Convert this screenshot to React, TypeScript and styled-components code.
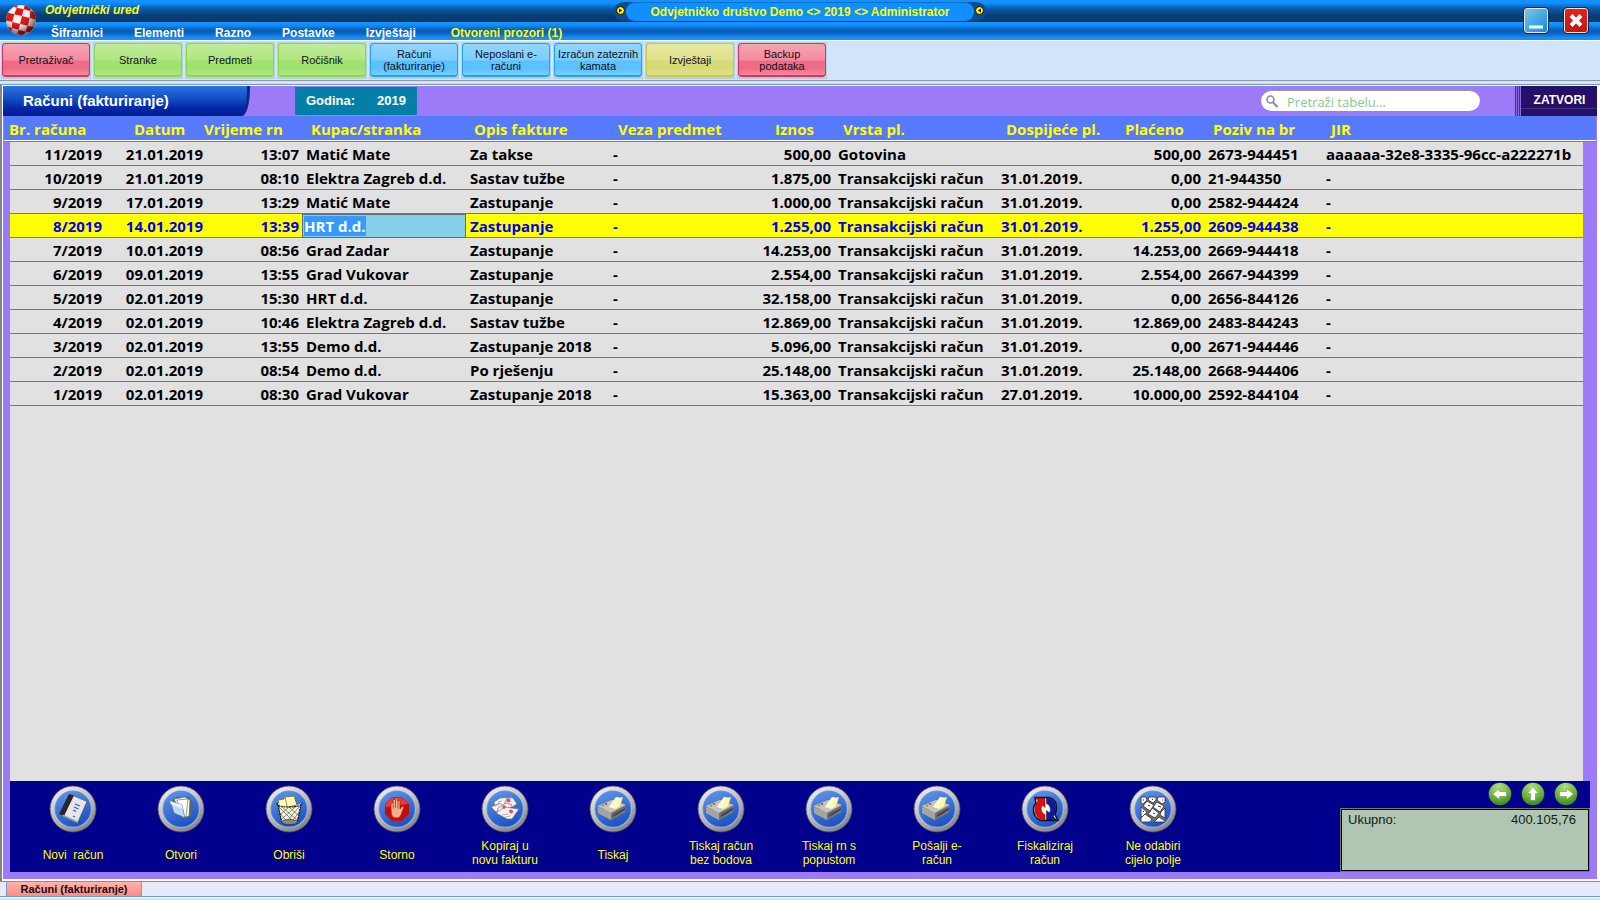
import React, { useEffect, useRef } from "react";
import styled, { createGlobalStyle } from "styled-components";

const sans = `"Liberation Sans", Arial, sans-serif`;
const grid = `"Open Sans", "Noto Sans", sans-serif`;

const GlobalStyle = createGlobalStyle`
  * { box-sizing: border-box; }
  body { margin: 0; background: #d0e5fa; font-family: ${sans}; }
  button, input { font: inherit; }
  button { border: 0; padding: 0; background: none; cursor: pointer; }
`;

const Shell = styled.div`
  display: flex;
  flex-direction: column;
  height: 100vh;
  min-height: 520px;
`;

/* Title bar */

const TitleBar = styled.header`
  display: grid;
  grid-template-columns: 1fr auto 1fr;
  align-items: start;
  height: 41px;
  flex: none;
  border-bottom: 1px solid #fff;
  background:
    linear-gradient(#1492ff 0, #1090ff 3px, #0b5fb4 8px, #083f78 15px, #083a6a 21px, #062c50 22px,
      #1492ff 22px, #1090ff 25px, #0a5cb4 30px, #0c62c0 33px, #1490ff 38px, #1492ff 40px);
`;

const Brand = styled.div`
  display: flex;
  gap: 8px;
  padding: 0 0 0 5px;
  white-space: nowrap;
`;

const Logo = styled.svg`
  width: 32px;
  height: 32px;
  margin-top: 4px;
`;

const AppName = styled.div`
  height: 22px;
  font: italic bold 12px/20px ${sans};
  color: #ffff00;
`;

const Menu = styled.nav`
  display: flex;
  gap: 31px;
  padding: 1px 0 0 6px;
`;

const MenuLink = styled.a<{ $hot?: boolean }>`
  margin-left: ${(p) => (p.$hot ? "4px" : "0")};
  font: bold 12px/20px ${sans};
  color: ${(p) => (p.$hot ? "#ffff00" : "#ffffff")};
  text-decoration: none;
`;

const Plaque = styled.div`
  display: flex;
  align-items: center;
  justify-content: space-between;
  width: 372px;
  height: 19px;
  margin-top: 2px;
  padding: 0 2px;
  border-radius: 10px;
  background: #0a4c8c;
`;

const PlaqueText = styled.div`
  flex: 1;
  height: 19px;
  margin: 0 1px;
  border-top: 1px solid #0d6fd0;
  border-radius: 9px;
  background: #1090ff;
  font: bold 12px/18px ${sans};
  color: #ffff00;
  text-align: center;
  white-space: nowrap;
`;

const Rivet = styled.svg`
  width: 9px;
  height: 9px;
  margin-bottom: 2px;
`;

const WindowButtons = styled.div`
  display: flex;
  justify-content: flex-end;
  gap: 14px;
  padding: 7px 11px 0 0;
`;

const WindowButton = styled.button<{ $close?: boolean }>`
  width: 26px;
  height: 27px;
  border: 1px solid #0a2a5c;
  border-radius: 4px;
  box-shadow: inset 0 0 0 1px #f0e4cc;
  background: ${(p) =>
    p.$close ? "linear-gradient(#e6231c, #c01812)" : "linear-gradient(135deg, #7cc8f0, #0c8cd8)"};

  svg { display: block; }
`;

/* Toolbar */

const Toolbar = styled.div`
  display: flex;
  flex: none;
  gap: 2px;
  height: 40px;
  padding: 1px 0 0 1px;
  border-bottom: 1px solid #9a93a8;
  background: #d0e5fa;
`;

const tones = {
  red: { edge: "#e0305c", top: "#f6a4b4", mid: "#f58ca0", low: "#ee6c88" },
  green: { edge: "#8cd84c", top: "#c0ec98", mid: "#b0e682", low: "#a0e270" },
  blue: { edge: "#1ca4f4", top: "#92d6fe", mid: "#7ccefe", low: "#5cc2fe" },
  olive: { edge: "#ccc84c", top: "#e6e8a0", mid: "#e0e28c", low: "#d8da78" },
};
type Tone = keyof typeof tones;

const ToolSlot = styled.div`
  width: 90px;
  height: 37px;
  padding: 1px;
  background: #b2d4e2;
`;

const ToolButton = styled.button<{ $tone: Tone }>`
  display: block;
  width: 88px;
  height: 34px;
  border: 1px solid ${(p) => tones[p.$tone].edge};
  border-bottom-width: 2px;
  border-radius: 4px;
  background: linear-gradient(
    ${(p) => tones[p.$tone].top} 0,
    ${(p) => tones[p.$tone].mid} 50%,
    ${(p) => tones[p.$tone].low} 56%,
    ${(p) => tones[p.$tone].low} 80%,
    ${(p) => tones[p.$tone].mid} 100%
  );
  font: 11px/12px ${sans};
  color: #101018;
  white-space: pre;
`;

/* Work area */

const Workspace = styled.main`
  display: flex;
  flex: 1;
  flex-direction: column;
  min-height: 0;
  margin-top: 3px;
  padding: 0 3px 2px 1px;
  border-top: 1px solid #6a9cc4;
  border-left: 2px solid #85838f;
  background: #fff;
`;

const Panel = styled.section`
  display: flex;
  flex: 1;
  flex-direction: column;
  min-height: 0;
  margin-top: 1px;
  padding-bottom: 7px;
  background: #9b7bf7;
`;

const PanelHead = styled.div`
  display: flex;
  flex: none;
  height: 30px;
`;

const PanelTitle = styled.h1`
  width: 247px;
  margin: 0 45px 0 0;
  padding-left: 20px;
  border-radius: 0 0 8px 0 / 0 0 28px 0;
  border-right: 3px solid #0a2880;
  background: linear-gradient(#2c72e4 0, #1450c4 12px, #0428a8 22px, #021c8c 30px);
  font: bold 15px/30px ${sans};
  color: #fff;
`;

const YearBox = styled.div`
  display: flex;
  justify-content: space-between;
  width: 122px;
  height: 28px;
  margin-top: 1px;
  padding: 0 11px;
  background: #0480a8;
  font: bold 13px/27px ${sans};
  color: #fff;
`;

const SearchBox = styled.label`
  display: flex;
  align-items: center;
  width: 219px;
  height: 21px;
  margin: 4px 35px 0 auto;
  padding: 0 10px 0 5px;
  border-radius: 11px;
  border-top: 1px solid #9c94b4;
  background: #fff;
`;

const SearchInput = styled.input`
  flex: 1;
  min-width: 0;
  height: 20px;
  margin-left: 9px;
  padding: 2px 0 0;
  border: 0;
  outline: 0;
  background: transparent;
  font: 13px/18px ${grid};
  &::placeholder { color: #8cc88c; opacity: 1; }
`;

const CloseButton = styled.button`
  width: 82px;
  height: 30px;
  padding: 0 0 3px 7px;
  background:
    linear-gradient(#463080, #463080) 6px 22px / 76px 1px no-repeat,
    repeating-linear-gradient(90deg, #4a2c90 0, #4a2c90 1px, #8a6ae0 1px, #8a6ae0 2px) 0 0 / 6px 30px no-repeat,
    #250f68;
  font: bold 12px/24px ${sans};
  color: #fff;
`;

/* Invoice grid */

const TableArea = styled.div`
  display: flex;
  flex: 1;
  flex-direction: column;
  min-height: 0;
  margin: 0 1px;
  overflow: hidden;
`;

const Table = styled.table`
  width: 100%;
  table-layout: fixed;
  border-spacing: 0;
  font: bold 15px/22px ${grid};
`;

const HeadCell = styled.th<{ $indent: number }>`
  height: 26px;
  padding: 2px 0 2px ${(p) => p.$indent}px;
  background: #567afb;
  box-shadow: inset 0 -1px 0 #567af0, inset 0 -2px 0 #fff;
  color: #ffff00;
  text-align: left;
  white-space: nowrap;
`;

const Row = styled.tr<{ $active: boolean }>`
  background: ${(p) => (p.$active ? "#ffff00" : "#e1e1e1")};
  color: ${(p) => (p.$active ? "#0000f4" : "#000")};
`;

const Cell = styled.td<{ $right?: boolean; $flush?: boolean; $editing?: boolean }>`
  height: 24px;
  padding: ${(p) => (p.$editing ? "0" : `1px ${p.$flush ? 1 : 3}px 1px 4px`)};
  box-shadow: inset 0 -1px 0 #5278e4;
  overflow: hidden;
  text-align: ${(p) => (p.$right ? "right" : "left")};
  white-space: nowrap;

  &:first-child { border-left: 6px solid #9b7bf7; }
  &:last-child { border-right: 13px solid #9b7bf7; }
`;

const EditInput = styled.input`
  display: block;
  width: 100%;
  height: 24px;
  padding: 0 1px;
  border: 1px solid #5c6c74;
  border-radius: 0;
  outline: 0;
  background: #87ceeb;
  font: bold 15px/22px ${grid};
  color: #0000f4;
  &::selection { background: rgba(51, 153, 255, 0.99); color: #fff; }
`;

const EmptyGrid = styled.div`
  flex: 1;
  border: solid #9b7bf7;
  border-width: 0 13px 0 6px;
  background: #e1e1e1;
`;

/* Action bar */

const ActionBar = styled.footer`
  display: flex;
  flex: none;
  height: 91px;
  margin: 0 7px;
  padding-left: 9px;
  background: #00008c;
`;

const ActionButton = styled.button`
  display: flex;
  flex-direction: column;
  align-items: center;
  width: 108px;
  padding-top: 4px;
  font: 12px/14px ${sans};
  color: #ffff00;
`;

const ActionLabel = styled.span<{ $single: boolean }>`
  display: flex;
  align-items: center;
  height: 30px;
  margin-top: 5px;
  padding-top: ${(p) => (p.$single ? "4px" : "0")};
  text-align: center;
  white-space: pre;
`;

const Totals = styled.div`
  display: flex;
  flex-direction: column;
  width: 250px;
  margin-left: auto;
`;

const Pager = styled.div`
  display: flex;
  justify-content: flex-end;
  gap: 9px;
  height: 27px;
  padding: 1px 12px 0 0;
`;

const PagerButton = styled.button`
  width: 24px;
  height: 24px;
  svg { display: block; }
`;

const TotalBox = styled.dl`
  display: flex;
  justify-content: space-between;
  height: 64px;
  margin: 0;
  padding: 2px 13px 0 7px;
  border: 1px solid #6c7c70;
  box-shadow: inset 0 0 0 1px #000;
  background: #b0c6b2;
  font: 13px/18px ${sans};
  color: #181818;
  dt, dd { margin: 0; }
`;

/* Window tabs */

const TabStrip = styled.div`
  display: flex;
  flex: none;
  height: 16px;
  padding-left: 6px;
  border-top: 1px solid #8f8f9b;
  border-bottom: 1px solid #6a9cc4;
  background: #e8eafa;
`;

const Tab = styled.button`
  width: 136px;
  border: solid #7c9cc0;
  border-width: 0 1px;
  background: linear-gradient(#ffb4ac, #fc8c84);
  font: bold 11px/14px ${sans};
  color: #1c0c10;
`;

const BottomEdge = styled.div`
  flex: none;
  height: 3px;
  border-top: 1px solid #fff;
  background: #d0e5fa;
`;

/* Drawings */

function BallLogo() {
  return (
    <Logo viewBox="0 0 32 32" aria-hidden="true">
      <defs>
        <radialGradient id="ballShade" cx="0.4" cy="0.35" r="0.65">
          <stop offset="0.5" stopColor="#000" stopOpacity="0" />
          <stop offset="1" stopColor="#200" stopOpacity="0.65" />
        </radialGradient>
        <clipPath id="ballClip"><circle cx="16" cy="16" r="15" /></clipPath>
      </defs>
      <g clipPath="url(#ballClip)">
        <rect width="32" height="32" fill="#f8f0ee" />
        <g fill="#e01818" transform="rotate(14 16 16)">
          <path d="M5-1h5l-1 6H3zM16-1h6l1 6h-7zM9 5h7v7H8zM23 5h6l2 7h-7zM1 12h7v8H1zM16 12h8v8h-8zM8 20h8v6H9zM24 20h8l-3 6h-6zM3 26h6l1 6H5zM16 26h7l-1 7h-6z" />
        </g>
        <circle cx="16" cy="16" r="15" fill="url(#ballShade)" />
      </g>
    </Logo>
  );
}

function PlaqueRivet({ flip }: { flip?: boolean }) {
  return (
    <Rivet viewBox="0 0 9 9" aria-hidden="true">
      <circle cx="4.5" cy="4.5" r="4" fill="#ffee10" stroke="#101008" />
      <path d={flip ? "M6 2.5v4l-3-2z" : "M3 2.5v4l3-2z"} fill="#101008" />
    </Rivet>
  );
}

const glyphs: Record<string, React.ReactNode> = {
  notebook: (
    <g>
      <path d="M23 10l15 6.500-9.500 21.500L12 30z" fill="#e4e6ea" stroke="#555a66" strokeWidth=".8" />
      <path d="M20 9l5 1.500L15 31l-5-2z" fill="#26262c" />
      <path d="M13 31l15 7 1-1.500-15-7z" fill="#9a9ca4" />
      <path d="M26 19l5 2M25 22l4.500 2M24 25l3 1.400M24 31l2 1" stroke="#3868a0" strokeWidth="1.300" />
    </g>
  ),
  folder: (
    <g stroke="#555c68" strokeWidth=".6">
      <path d="M16 15l4-3 5 1 7-1 2 4 2 5-2 4 1 5-5 3-12-9z" fill="#5c6878" />
      <path d="M17 14l11-2 5 3-1 16-6 2z" fill="#fffbe0" />
      <path d="M20 15l11-1-2 18-5-2z" fill="#fff" />
      <path d="M13 16l12 4 3 13-11-5z" fill="#bcd8f8" />
      <path d="M13 16l12 4 .8 4-12-5z" fill="#e6f2ff" stroke="none" />
    </g>
  ),
  bin: (
    <g>
      <path d="M13 15l6-1 1-2 9-1 3 9-17 4z" fill="#fffcc0" stroke="#7c7418" strokeWidth=".9" />
      <path d="M20 12l2 9" stroke="#a8a020" />
      <path d="M13 18l4 20q7 3 15 0l4-20q-12 8-23 0z" fill="#f6f4d8" />
      <path d="M13 21l17 17M17 22l15 13M24 22l10 9M14 27l10 12M36 20L20 38M30 22L17 34M24 22l-9 8M35 26L25 39" stroke="#5c5c50" strokeWidth=".7" />
      <path d="M12 18q0 4 12 4t13-4M13 20l4 18q7 3 15 0l4-18" fill="none" stroke="#16161c" strokeWidth="1.200" strokeDasharray="2 .7" />
      <ellipse cx="24.500" cy="37" rx="8" ry="2.500" fill="#88888c" stroke="#333" strokeWidth=".7" />
    </g>
  ),
  stop: (
    <g>
      <path d="M19 12h10l7 7v10l-7 7H19l-7-7V19z" fill="#c80c0c" />
      <path d="M19 12.500h10l6.500 6.500-23 3V19z" fill="#e83c34" />
      <path d="M18 24v-6q1.200-1.500 2 0v-3q1.200-1.500 2.200 0v-1q1.400-1.500 2.400 0v2q1.400-1.500 2.400 0v8l2-2.500q2-1 1.800.8L28 30q-1 3-4.500 3-4 0-5-3.500z" fill="#f2b08c" stroke="#8c2c18" strokeWidth=".7" />
      <path d="M20.200 17v6.500M22.500 15v8M25 16v7.500" stroke="#8c2c18" strokeWidth=".7" />
    </g>
  ),
  copy: (
    <g fill="#f2f2f4" stroke="#62626e" strokeWidth=".6">
      <path d="M13 17l6-4 13-1-5 8-13 4z" />
      <path d="M26 13l6 0 4 6-8 5-6-2z" />
      <path d="M10 22l9-4 5 5-9 4z" />
      <path d="M17 23l8-5 6 2-4 7-11 1z" />
      <path d="M15 28l9-6 14 2-7 10-5 0z" />
      <g fill="#f0485c" stroke="none">
        <circle cx="27.500" cy="15.500" r="2" /><circle cx="23" cy="22" r="1.800" /><circle cx="30" cy="26.500" r="2" />
      </g>
      <path d="M14 21l5-2M21 30l6-1M24 32l5-1M17 17l4-1" stroke="#8c8c98" />
    </g>
  ),
  printer: (
    <g>
      <path d="M9 21l13-6 15 6-1 6-14 8-13-7z" fill="#8c8c8c" />
      <path d="M9 21l14-6 14 5-15 8z" fill="#c4c4c2" />
      <path d="M22 28l15-8v5l-15 10z" fill="#6e6e70" />
      <path d="M9 22l13 6v7L9 28z" fill="#a4a4a4" />
      <path d="M24 29.500l12-6.500v2L24 32z" fill="#48484a" />
      <path d="M20 22l7-10q4 1 7 0l-3 9q-3 3-5 3z" fill="#fff8a4" />
      <path d="M27 12l3 .4-5 10.600-5-1z" fill="#fffcd4" />
      <path d="M13 20l2 1" stroke="#30c830" strokeWidth="1.400" />
      <path d="M16 18.500l2 1" stroke="#e03028" strokeWidth="1.400" />
    </g>
  ),
  cycle: (
    <g>
      <path d="M14 12.500h14q8 2 7.500 11-.5 4-1.500 6l3 6H20q-8-3-7.500-12 .5-4 2.500-5z" fill="#fff8dc" stroke="#18141c" strokeWidth="1.600" />
      <path d="M15 13h9v9.500l-2.500-2.500q-2.500 3.500-.5 7 1 2 3 2.500V35q-6 0-9-5.500-3-7.500 2-13.500z" fill="#d81014" stroke="#58080c" strokeWidth=".5" />
      <path d="M35.500 35H25.500v-9.500l3 2.500q2-3.500 0-7-1-2-3-2.500V13q6 0 8.500 5.500 2.500 7-1.500 13z" fill="#1018a4" stroke="#080828" strokeWidth=".5" />
    </g>
  ),
  keys: (
    <g>
      <rect x="12" y="12" width="24" height="25" fill="#707074" />
      <g fill="#fbfbfb" stroke="#303034" strokeWidth=".8">
        <path d="M12 12h5l1 3-4 4-2-1zM20 12h7l0 3-3 3-5-3zM29 12h7v5l-3 2-5-4z" />
        <path d="M18 16l7 4-4 6-7-5zM28 17l7 4-4 6-7-5z" />
        <path d="M12 22l6 5-4 5-2-1zM21 27l2-4 7 5-4 5-7-4zM32 27l4-4v10l-5-3z" />
        <path d="M12 33l4-4 7 5-2 3h-9zM30 32l6 4v1H25z" />
      </g>
      <path d="M19 20l2 1M29 21l3 1M14 26l1 1M24 28l2 1M14 15l1 0M23 14l1 1M33 15l1 0" stroke="#303034" />
    </g>
  ),
};

function RoundIcon({ name }: { name: string }) {
  return (
    <svg width="48" height="48" viewBox="0 0 48 48" aria-hidden="true">
      <defs>
        <linearGradient id={`rim-${name}`} x1="0.2" y1="0" x2="0.75" y2="1">
          <stop offset="0" stopColor="#f0f0f0" />
          <stop offset="0.5" stopColor="#bcbcc0" />
          <stop offset="1" stopColor="#808084" />
        </linearGradient>
        <linearGradient id={`disc-${name}`} x1="0.2" y1="0" x2="0.6" y2="1">
          <stop offset="0" stopColor="#5c94ea" />
          <stop offset="1" stopColor="#1c50c0" />
        </linearGradient>
      </defs>
      <circle cx="24" cy="24" r="23" fill={`url(#rim-${name})`} stroke="#50545c" strokeWidth=".8" />
      <circle cx="24" cy="24" r="19" fill="#dcdce2" opacity=".6" />
      <circle cx="24" cy="24" r="18" fill={`url(#disc-${name})`} stroke="#5c8cdc" strokeWidth=".8" />
      {glyphs[name]}
    </svg>
  );
}

function ArrowIcon({ turn }: { turn: number }) {
  return (
    <svg width="24" height="24" viewBox="0 0 24 24" aria-hidden="true">
      <defs>
        <radialGradient id={`leaf${turn}`} cx="0.45" cy="0.2" r="0.8">
          <stop offset="0" stopColor="#b4e478" />
          <stop offset="0.6" stopColor="#6cb43c" />
          <stop offset="1" stopColor="#3c8420" />
        </radialGradient>
      </defs>
      <circle cx="12" cy="12" r="11.300" fill={`url(#leaf${turn})`} />
      <path
        transform={`rotate(${turn} 12 12)`}
        d="M4.500 12l7-5.500v3H18.500v5h-7v3z"
        fill="#fff"
        stroke="#4a8c28"
        strokeWidth=".5"
      />
    </svg>
  );
}

/* Data */

const menu = ["Šifrarnici", "Elementi", "Razno", "Postavke", "Izvještaji"];

const tools: { label: string; tone: Tone }[] = [
  { label: "Pretraživač", tone: "red" },
  { label: "Stranke", tone: "green" },
  { label: "Predmeti", tone: "green" },
  { label: "Ročišnik", tone: "green" },
  { label: "Računi\n(fakturiranje)", tone: "blue" },
  { label: "Neposlani e-\nračuni", tone: "blue" },
  { label: "Izračun zateznih\nkamata", tone: "blue" },
  { label: "Izvještaji", tone: "olive" },
  { label: "Backup\npodataka", tone: "red" },
];

const columns: { title: string; width?: number; indent: number; right?: boolean; flush?: boolean }[] = [
  { title: "Br. računa", width: 101, indent: 5, right: true },
  { title: "Datum", width: 99, indent: 29, right: true, flush: true },
  { title: "Vrijeme rn", width: 98, indent: 0, right: true },
  { title: "Kupac/stranka", width: 164, indent: 9 },
  { title: "Opis fakture", width: 143, indent: 8 },
  { title: "Veza predmet", width: 144, indent: 9 },
  { title: "Iznos", width: 81, indent: 22, right: true },
  { title: "Vrsta pl.", width: 163, indent: 9 },
  { title: "Dospijeće pl.", width: 120, indent: 9 },
  { title: "Plaćeno", width: 87, indent: 8, right: true },
  { title: "Poziv na br", width: 118, indent: 9 },
  { title: "JIR", indent: 9 },
];

const TR = "Transakcijski račun";
const rows: string[][] = [
  ["11/2019", "21.01.2019", "13:07", "Matić Mate", "Za takse", "-", "500,00", "Gotovina", "", "500,00", "2673-944451", "aaaaaa-32e8-3335-96cc-a222271b"],
  ["10/2019", "21.01.2019", "08:10", "Elektra Zagreb d.d.", "Sastav tužbe", "-", "1.875,00", TR, "31.01.2019.", "0,00", "21-944350", "-"],
  ["9/2019", "17.01.2019", "13:29", "Matić Mate", "Zastupanje", "-", "1.000,00", TR, "31.01.2019.", "0,00", "2582-944424", "-"],
  ["8/2019", "14.01.2019", "13:39", "HRT d.d.", "Zastupanje", "-", "1.255,00", TR, "31.01.2019.", "1.255,00", "2609-944438", "-"],
  ["7/2019", "10.01.2019", "08:56", "Grad Zadar", "Zastupanje", "-", "14.253,00", TR, "31.01.2019.", "14.253,00", "2669-944418", "-"],
  ["6/2019", "09.01.2019", "13:55", "Grad Vukovar", "Zastupanje", "-", "2.554,00", TR, "31.01.2019.", "2.554,00", "2667-944399", "-"],
  ["5/2019", "02.01.2019", "15:30", "HRT d.d.", "Zastupanje", "-", "32.158,00", TR, "31.01.2019.", "0,00", "2656-844126", "-"],
  ["4/2019", "02.01.2019", "10:46", "Elektra Zagreb d.d.", "Sastav tužbe", "-", "12.869,00", TR, "31.01.2019.", "12.869,00", "2483-844243", "-"],
  ["3/2019", "02.01.2019", "13:55", "Demo d.d.", "Zastupanje 2018", "-", "5.096,00", TR, "31.01.2019.", "0,00", "2671-944446", "-"],
  ["2/2019", "02.01.2019", "08:54", "Demo d.d.", "Po rješenju", "-", "25.148,00", TR, "31.01.2019.", "25.148,00", "2668-944406", "-"],
  ["1/2019", "02.01.2019", "08:30", "Grad Vukovar", "Zastupanje 2018", "-", "15.363,00", TR, "27.01.2019.", "10.000,00", "2592-844104", "-"],
];
const ACTIVE_ROW = 3;
const EDIT_COLUMN = 3;

const actions = [
  { label: "Novi  račun", icon: "notebook" },
  { label: "Otvori", icon: "folder" },
  { label: "Obriši", icon: "bin" },
  { label: "Storno", icon: "stop" },
  { label: "Kopiraj u\nnovu fakturu", icon: "copy" },
  { label: "Tiskaj", icon: "printer" },
  { label: "Tiskaj račun\nbez bodova", icon: "printer" },
  { label: "Tiskaj rn s\npopustom", icon: "printer" },
  { label: "Pošalji e-\nračun", icon: "printer" },
  { label: "Fiskaliziraj\nračun", icon: "cycle" },
  { label: "Ne odabiri\ncijelo polje", icon: "keys" },
];

export default function App() {
  const editor = useRef<HTMLInputElement>(null);

  useEffect(() => {
    editor.current?.focus();
    editor.current?.select();
  }, []);

  return (
    <Shell>
      <GlobalStyle />
      <TitleBar>
        <Brand>
          <BallLogo />
          <div>
            <AppName>Odvjetnički ured</AppName>
            <Menu>
              {menu.map((m) => (
                <MenuLink key={m} href="#">{m}</MenuLink>
              ))}
              <MenuLink href="#" $hot>Otvoreni prozori (1)</MenuLink>
            </Menu>
          </div>
        </Brand>
        <Plaque>
          <PlaqueRivet />
          <PlaqueText>{"Odvjetničko društvo Demo <> 2019 <> Administrator"}</PlaqueText>
          <PlaqueRivet flip />
        </Plaque>
        <WindowButtons>
          <WindowButton aria-label="Minimiziraj">
            <svg width="24" height="25" viewBox="0 0 24 25"><path d="M5 19h14" stroke="#fff" strokeWidth="3" /></svg>
          </WindowButton>
          <WindowButton $close aria-label="Zatvori program">
            <svg width="24" height="25" viewBox="0 0 24 25"><path d="M7 7.500l10 10M17 7.500l-10 10" stroke="#fff" strokeWidth="4" /></svg>
          </WindowButton>
        </WindowButtons>
      </TitleBar>

      <Toolbar role="toolbar">
        {tools.map((t) => (
          <ToolSlot key={t.label}>
            <ToolButton $tone={t.tone}>{t.label}</ToolButton>
          </ToolSlot>
        ))}
      </Toolbar>

      <Workspace>
        <Panel>
          <PanelHead>
            <PanelTitle>Računi (fakturiranje)</PanelTitle>
            <YearBox>
              <span>Godina:</span>
              <span>2019</span>
            </YearBox>
            <SearchBox>
              <svg width="12" height="13" viewBox="0 0 12 13" aria-hidden="true">
                <circle cx="4.500" cy="4.500" r="3.500" fill="none" stroke="#8c8c94" strokeWidth="1.600" />
                <path d="M7 7.500l4.500 4.500" stroke="#8c8c94" strokeWidth="2" />
              </svg>
              <SearchInput type="text" placeholder="Pretraži tabelu..." aria-label="Pretraži tabelu" />
            </SearchBox>
            <CloseButton>ZATVORI</CloseButton>
          </PanelHead>

          <TableArea>
            <Table>
              <colgroup>
                {columns.map((c) => (
                  <col key={c.title} width={c.width} />
                ))}
              </colgroup>
              <thead>
                <tr>
                  {columns.map((c) => (
                    <HeadCell key={c.title} $indent={c.indent}>{c.title}</HeadCell>
                  ))}
                </tr>
              </thead>
              <tbody>
                {rows.map((r, i) => (
                  <Row key={r[0]} $active={i === ACTIVE_ROW}>
                    {r.map((value, j) => {
                      const editing = i === ACTIVE_ROW && j === EDIT_COLUMN;
                      return (
                        <Cell key={j} $right={columns[j].right} $flush={columns[j].flush} $editing={editing}>
                          {editing ? (
                            <EditInput ref={editor} defaultValue={value} aria-label={columns[j].title} />
                          ) : (
                            value
                          )}
                        </Cell>
                      );
                    })}
                  </Row>
                ))}
              </tbody>
            </Table>
            <EmptyGrid />
          </TableArea>

          <ActionBar>
            {actions.map((a) => (
              <ActionButton key={a.label}>
                <RoundIcon name={a.icon} />
                <ActionLabel $single={!a.label.includes("\n")}>{a.label}</ActionLabel>
              </ActionButton>
            ))}
            <Totals>
              <Pager>
                <PagerButton aria-label="Prethodni"><ArrowIcon turn={0} /></PagerButton>
                <PagerButton aria-label="Gore"><ArrowIcon turn={90} /></PagerButton>
                <PagerButton aria-label="Sljedeći"><ArrowIcon turn={180} /></PagerButton>
              </Pager>
              <TotalBox>
                <dt>Ukupno:</dt>
                <dd>400.105,76</dd>
              </TotalBox>
            </Totals>
          </ActionBar>
        </Panel>
      </Workspace>

      <TabStrip>
        <Tab>Računi (fakturiranje)</Tab>
      </TabStrip>
      <BottomEdge />
    </Shell>
  );
}
